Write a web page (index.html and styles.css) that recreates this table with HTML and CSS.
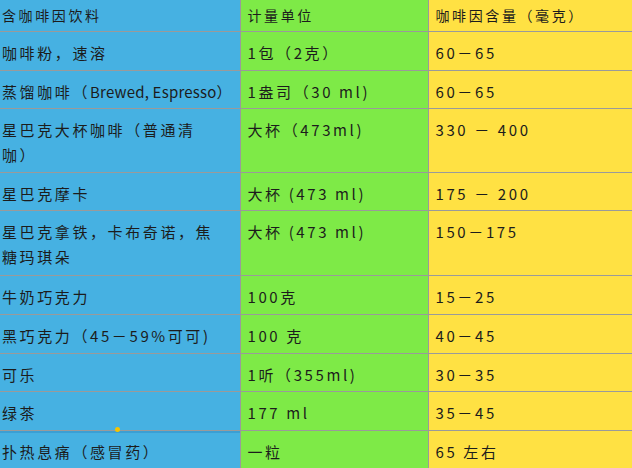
FILE: index.html
```html
<!DOCTYPE html>
<html lang="zh">
<head>
<meta charset="utf-8">
<title>咖啡因含量</title>
<link rel="stylesheet" href="styles.css">
</head>
<body>
<div class="wrap">
<table class="caf">
  <colgroup><col class="c1"><col class="c2"><col class="c3"></colgroup>
  <tr class="head">
    <td class="b">含咖啡因饮料</td><td class="g">计量单位</td><td class="y">咖啡因含量（毫克）</td>
  </tr>
  <tr>
    <td class="b">咖啡粉，速溶</td><td class="g">1包（2克）</td><td class="y">60－65</td>
  </tr>
  <tr>
    <td class="b nw">蒸馏咖啡（<span class="lat">Brewed, Espresso</span>）</td><td class="g">1盎司（30 ml)</td><td class="y">60－65</td>
  </tr>
  <tr>
    <td class="b">星巴克大杯咖啡（普通清咖）</td><td class="g">大杯（473ml)</td><td class="y">330 － 400</td>
  </tr>
  <tr>
    <td class="b">星巴克摩卡</td><td class="g">大杯 (473 ml)</td><td class="y">175 － 200</td>
  </tr>
  <tr class="tall">
    <td class="b">星巴克拿铁，卡布奇诺，焦糖玛琪朵</td><td class="g">大杯 (473 ml)</td><td class="y">150－175</td>
  </tr>
  <tr>
    <td class="b">牛奶巧克力</td><td class="g">100克</td><td class="y">15－25</td>
  </tr>
  <tr>
    <td class="b">黑巧克力（45－59%可可)</td><td class="g">100 克</td><td class="y">40－45</td>
  </tr>
  <tr>
    <td class="b">可乐</td><td class="g">1听（355ml)</td><td class="y">30－35</td>
  </tr>
  <tr>
    <td class="b">绿茶</td><td class="g">177 ml</td><td class="y">35－45</td>
  </tr>
  <tr class="last">
    <td class="b">扑热息痛（感冒药）</td><td class="g">一粒</td><td class="y">65 左右</td>
  </tr>
</table>
<span class="handle"></span>
</div>
</body>
</html>
```
FILE: styles.css
```css
html, body {
  margin: 0;
  padding: 0;
  background: #ffffff;
}
body {
  width: 632px;
  height: 468px;
  overflow: hidden;
  font-family: "Noto Sans CJK SC", "Noto Sans", sans-serif;
  color: #1c1c1c;
}
.wrap {
  position: relative;
}
.caf {
  border-collapse: collapse;
  table-layout: fixed;
  width: 632px;
  font-size: 15px;
  letter-spacing: 2.6px;
  line-height: 25px;
}
.c1 { width: 240px; }
.c2 { width: 188px; }
.c3 { width: 204px; }
.caf td {
  vertical-align: top;
  padding: 8px 8px 4.6px 7px;
  border-bottom: 1px solid #9a9a9a;
  border-right: 1px solid #9a9a9a;
}
.caf td.b {
  background: #46b1e2;
  padding-left: 2px;
  padding-right: 22px;
}
.caf td.nw {
  white-space: nowrap;
}
.caf td.g {
  background: #7eea47;
}
.caf td.y {
  background: #ffe143;
  border-right: none;
}
.caf .head td {
  padding-top: 3px;
  padding-bottom: 3px;
  font-size: 14px;
}
.caf .tall td {
  padding-bottom: 6px;
}
.lat {
  letter-spacing: 0.2px;
}
.caf .last td.b {
  box-shadow: inset 0 2px 0 #3b9fd4;
}
.handle {
  position: absolute;
  left: 115px;
  top: 427px;
  width: 5px;
  height: 5px;
  border-radius: 50%;
  background: #f5c400;
}
```
